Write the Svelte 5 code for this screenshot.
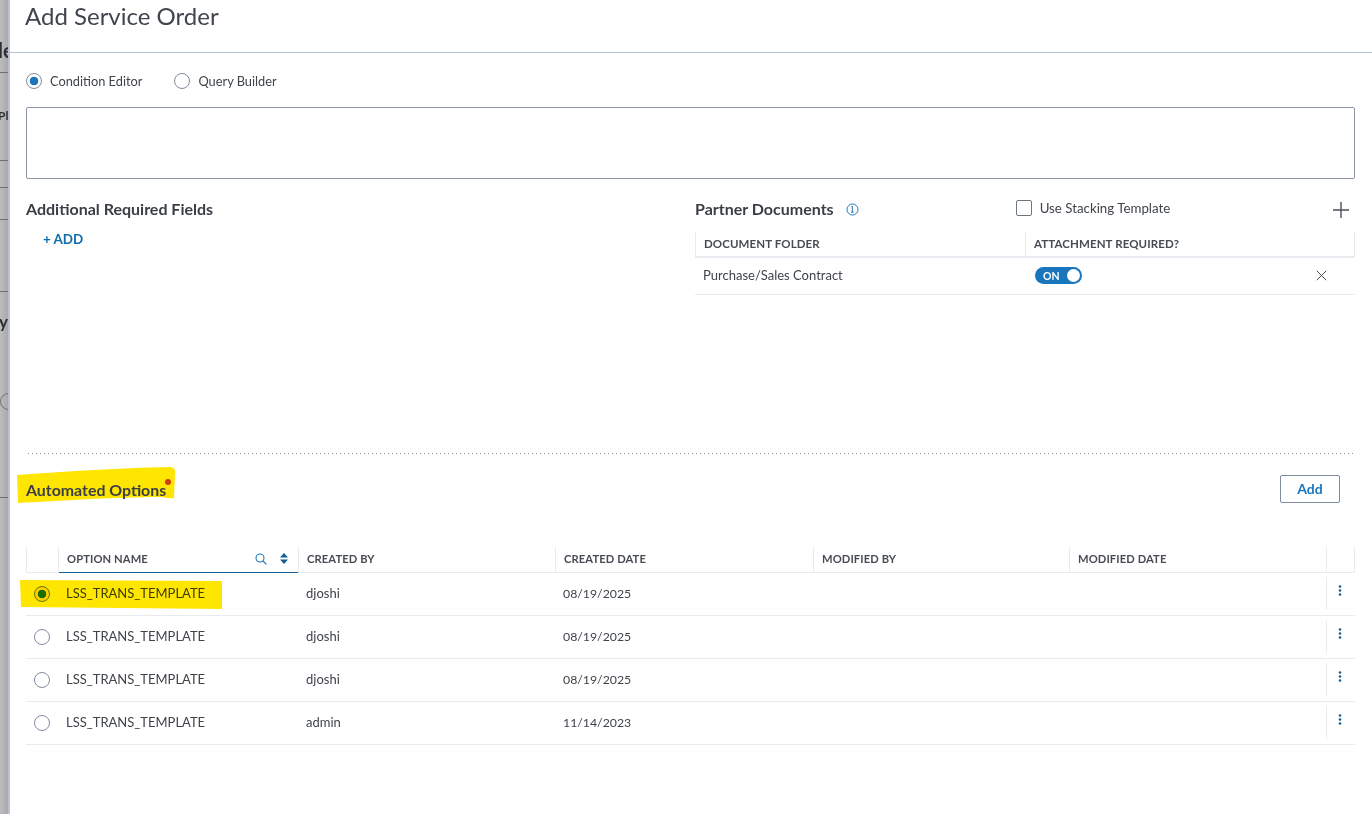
<script>
  const columns = ['Created By', 'Created Date', 'Modified By', 'Modified Date'];
  const rows = [
    { name: 'LSS_TRANS_TEMPLATE', by: 'djoshi', date: '08/19/2025', selected: true },
    { name: 'LSS_TRANS_TEMPLATE', by: 'djoshi', date: '08/19/2025' },
    { name: 'LSS_TRANS_TEMPLATE', by: 'djoshi', date: '08/19/2025' },
    { name: 'LSS_TRANS_TEMPLATE', by: 'admin', date: '11/14/2023' },
  ];
</script>

<div class="page">
  <div class="backdrop">
    <span class="frag f1">le</span>
    <span class="frag f2">Pl</span>
    <span class="frag f3">y</span>
    <i class="rule r1"></i>
    <i class="rule r2"></i>
    <i class="rule r3"></i>
    <i class="rule r4"></i>
    <i class="rule r5"></i>
    <i class="rule r6"></i>
    <i class="ghost-radio"></i>
  </div>

  <div class="modal">
    <header class="modal-head"><h1>Add Service Order</h1></header>

    <div class="body">
      <div class="mode">
        <label class="radio-label"><span class="radio on"></span>Condition Editor</label>
        <label class="radio-label"><span class="radio"></span>Query Builder</label>
      </div>

      <div class="editor"></div>

      <div class="split">
        <section class="fields">
          <h2>Additional Required Fields</h2>
          <a class="add-link" href="#add">+ ADD</a>
        </section>

        <section class="partner">
          <div class="partner-head">
            <h2>Partner Documents</h2>
            <svg class="info" width="13" height="13" viewBox="0 0 13 13">
              <circle cx="6.5" cy="6.5" r="5.5" fill="none" stroke="#1a76bc" />
              <path d="M5.3 3.7h1.6M6.3 3.7v5.4M5 9.2h2.8" fill="none" stroke="#1a76bc" />
            </svg>
            <label class="stack"><span class="check"></span>Use Stacking Template</label>
            <svg class="plus" width="16" height="16" viewBox="0 0 16 16">
              <path d="M8 0v16M0 8h16" stroke="#4a4f57" stroke-width="1.4" />
            </svg>
          </div>
          <div class="doc-table">
            <div class="doc-row doc-header">
              <div class="th">Document Folder</div>
              <div class="th">Attachment Required?</div>
            </div>
            <div class="doc-row doc-body">
              <div class="td">Purchase/Sales Contract</div>
              <div class="td toggle-cell">
                <span class="toggle">ON<span class="knob"></span></span>
                <svg class="close" width="11" height="11" viewBox="0 0 11 11">
                  <path d="M.8.8l9.4 9.4M10.2.8L.8 10.2" stroke="#444a52" stroke-width="1" />
                </svg>
              </div>
            </div>
          </div>
        </section>
      </div>

      <div class="dots"></div>

      <div class="auto-head">
        <h2 class="auto-title">
          <svg class="marker m1" width="158" height="38" viewBox="0 0 158 38" preserveAspectRatio="none">
            <path d="M0 8C40 5 100 1 154 0c4 1 4 3 4 6l-1 25c-5 1-9-1-14-1C100 30 40 34 1 36z" fill="#ffe600" />
          </svg>
          <span class="auto-text">Automated Options</span>
          <i class="req"></i>
        </h2>
        <button class="add-btn">Add</button>
      </div>

      <div class="opt-table">
        <div class="opt-row opt-header">
          <div class="th sel"></div>
          <div class="th name">
            Option Name
            <svg class="search" width="12" height="12" viewBox="0 0 12 12">
              <circle cx="5" cy="5" r="4" fill="none" stroke="#1a76bc" stroke-width="1.1" />
              <path d="M8 8l3.4 3.4" stroke="#1a76bc" stroke-width="1.1" />
            </svg>
            <svg class="sort" width="8" height="11" viewBox="0 0 8 11">
              <path d="M4 0l4 4.4H0zM4 11L0 6.6h8z" fill="#125e96" />
            </svg>
          </div>
          {#each columns as col}
            <div class="th">{col}</div>
          {/each}
          <div class="th menu-col"></div>
        </div>

        {#each rows as row}
          <div class="opt-row opt-body">
            {#if row.selected}
              <svg class="marker m2" width="202" height="29" viewBox="0 0 202 29" preserveAspectRatio="none">
                <path d="M0 0l202 1v28L1 27z" fill="#ffe600" />
              </svg>
            {/if}
            <div class="td sel"><span class="radio" class:picked={row.selected}></span></div>
            <div class="td name-cell">{row.name}</div>
            <div class="td">{row.by}</div>
            <div class="td date">{row.date}</div>
            <div class="td"></div>
            <div class="td"></div>
            <div class="td menu-col">
              <svg width="4" height="11" viewBox="0 0 4 11">
                <circle cx="2" cy="1.5" r="1.3" fill="#125e96" />
                <circle cx="2" cy="5.5" r="1.3" fill="#125e96" />
                <circle cx="2" cy="9.5" r="1.3" fill="#125e96" />
              </svg>
            </div>
          </div>
        {/each}
      </div>
    </div>
  </div>
</div>

<style>
  :global(body) {
    background: #fff;
  }

  .page {
    display: flex;
    height: 814px;
    overflow: hidden;
    font-family: Lato, 'Liberation Sans', sans-serif;
    color: #3f444b;
  }

  .backdrop {
    position: relative;
    flex: 0 0 8px;
    overflow: hidden;
    background: linear-gradient(90deg, #bdbdbd, #a9a9a9);
    border-right: 2px solid #b9c2ce;
  }

  .frag {
    position: absolute;
    left: 0;
    font-weight: 700;
    color: #2b2f36;
  }
  .f1 { top: 38px; left: -2px; font-size: 20px; }
  .f2 { top: 108px; left: -2px; font-size: 12px; }
  .f3 { top: 311px; left: -1px; font-size: 17px; }

  .rule {
    position: absolute;
    left: 0;
    right: 0;
    height: 1px;
    background: #6d6f73;
  }
  .r1 { top: 72px; }
  .r2 { top: 160px; }
  .r3 { top: 187px; }
  .r4 { top: 219px; }
  .r5 { top: 291px; }
  .r6 { top: 497px; }

  .ghost-radio {
    position: absolute;
    top: 393px;
    left: 0;
    width: 15px;
    height: 15px;
    border: 1px solid #6d6f73;
    border-radius: 50%;
  }

  .modal {
    flex: 1;
    min-width: 0;
    background: #fff;
  }

  .modal-head {
    height: 53px;
    box-sizing: border-box;
    padding: 1px 0 0 15px;
    border-bottom: 1px solid #b5c3d1;
  }

  h1 {
    margin: 0;
    font-size: 24px;
    line-height: 30px;
    font-weight: 400;
    color: #41464d;
  }

  .body {
    padding: 20px 17px 0 16px;
  }

  .mode {
    display: flex;
    gap: 32px;
    height: 16px;
  }

  .radio-label {
    display: flex;
    align-items: center;
    gap: 8px;
    font-size: 12.8px;
  }

  .radio {
    width: 16px;
    height: 16px;
    box-sizing: border-box;
    flex: none;
    display: inline-block;
    border: 1px solid #7f8ba0;
    border-radius: 50%;
    background: #fff;
  }
  .radio.on {
    background: radial-gradient(circle, #1a76bc 0 4px, #fff 4.6px);
  }
  .radio.picked {
    border-color: #5f7f20;
    background: radial-gradient(circle, #1f7a0a 0 4px, #ffe600 4.6px);
  }

  .editor {
    height: 72px;
    box-sizing: border-box;
    margin-top: 18px;
    border: 1px solid #8a94a6;
    border-radius: 2px;
  }

  .split {
    display: flex;
    margin-top: 20px;
    height: 254px;
  }

  .fields {
    flex: 0 0 669px;
  }

  h2 {
    margin: 0;
    font-size: 16px;
    line-height: 20px;
    font-weight: 700;
    color: #3a3f46;
  }

  .add-link {
    display: block;
    margin: 11px 0 0 17px;
    font-size: 13.4px;
    line-height: 18px;
    font-weight: 700;
    color: #0f6cad;
    text-decoration: none;
  }

  .partner {
    flex: 1;
  }

  .partner-head {
    display: flex;
    align-items: center;
    height: 20px;
    margin-bottom: 13px;
  }

  .info {
    margin-left: 12px;
    flex: none;
  }

  .stack {
    display: flex;
    align-items: center;
    gap: 8px;
    margin: -2px 0 0 157px;
    font-size: 13.3px;
  }

  .check {
    width: 16px;
    height: 16px;
    box-sizing: border-box;
    border: 1px solid #6f7785;
    border-radius: 2px;
  }

  .plus {
    margin: 2px 6px 0 auto;
  }

  .th {
    display: flex;
    align-items: center;
    padding-left: 8px;
    font-size: 11.5px;
    font-weight: 700;
    letter-spacing: 0.1px;
    text-transform: uppercase;
    border-left: 1px solid #e8ebef;
    color: #474c54;
  }

  .td {
    display: flex;
    align-items: center;
    font-size: 13px;
    padding-left: 8px;
  }

  .doc-row {
    display: grid;
    grid-template-columns: 330px 1fr;
    box-sizing: border-box;
  }

  .doc-header {
    height: 26px;
    border-bottom: 2px solid #e8ebef;
    border-right: 1px solid #e8ebef;
  }

  .doc-header .th {
    padding-bottom: 2px;
  }

  .doc-body {
    height: 37px;
    border-bottom: 1px solid #e8ebef;
  }

  .doc-body .td {
    padding-bottom: 3px;
  }

  .doc-body .toggle-cell {
    justify-content: space-between;
    padding: 0 28px 1px 10px;
  }

  .toggle {
    position: relative;
    display: flex;
    align-items: center;
    box-sizing: border-box;
    width: 47px;
    height: 17px;
    padding-left: 8px;
    border-radius: 9px;
    background: #1a76bc;
    color: #fff;
    font-size: 10.5px;
    font-weight: 700;
  }

  .knob {
    position: absolute;
    top: 2px;
    right: 2px;
    width: 13px;
    height: 13px;
    border-radius: 50%;
    background: #fff;
  }

  .dots {
    height: 1px;
    margin-left: 2px;
    background: repeating-linear-gradient(90deg, #8d939c 0 1px, transparent 1px 4px);
  }

  .auto-head {
    display: flex;
    justify-content: space-between;
    align-items: center;
    height: 28px;
    margin-top: 21px;
  }

  .auto-title {
    position: relative;
    font-size: 15.9px;
    padding-top: 2px;
  }

  .auto-text {
    position: relative;
  }

  .marker {
    position: absolute;
    mix-blend-mode: multiply;
  }
  .m1 {
    left: -9px;
    top: -11px;
  }
  .m2 {
    left: -6px;
    top: 7px;
    z-index: 2;
  }

  .req {
    position: absolute;
    top: 1px;
    right: -5px;
    width: 6px;
    height: 6px;
    border-radius: 50%;
    background: #d03c10;
  }

  .add-btn {
    width: 60px;
    height: 28px;
    margin-right: 15px;
    margin-top: -1px;
    padding: 0;
    font: 700 14px Lato, 'Liberation Sans', sans-serif;
    color: #1a76bc;
    background: #fff;
    border: 1px solid #7f8ba0;
    border-radius: 2px;
  }

  .opt-table {
    margin-top: 44px;
  }

  .opt-row {
    position: relative;
    display: grid;
    box-sizing: border-box;
    grid-template-columns: 32px 240px 257px 258px 256px 257px 29px;
  }

  .opt-header {
    height: 26px;
    border-bottom: 1px solid #e8ebef;
  }

  .opt-header .th {
    font-size: 11.2px;
    padding-bottom: 2px;
  }

  .opt-header .name {
    position: relative;
    padding-bottom: 3px;
    box-shadow: inset 0 -1px 0 #125e96;
    margin-bottom: -1px;
  }

  .search {
    margin-left: auto;
  }

  .sort {
    margin: 0 10px 0 13px;
  }

  .opt-body {
    height: 43px;
    border-bottom: 1px solid #e8ebef;
  }

  .opt-body .td {
    padding-bottom: 3px;
  }

  .opt-body .date {
    padding-bottom: 1px;
    font-size: 12.3px;
  }

  .sel {
    border-left: 1px solid #e8ebef;
  }

  .opt-body .sel {
    border-left: 0;
    padding-left: 8px;
    padding-bottom: 0;
  }

  .name-cell {
    padding-left: 8px;
  }

  .menu-col {
    border-right: 1px solid #e8ebef;
  }

  .opt-body .menu-col {
    margin: 4px 0 5px;
    border-right: 0;
    border-left: 1px solid #e8ebef;
    padding-left: 11px;
    padding-bottom: 6px;
  }
</style>
